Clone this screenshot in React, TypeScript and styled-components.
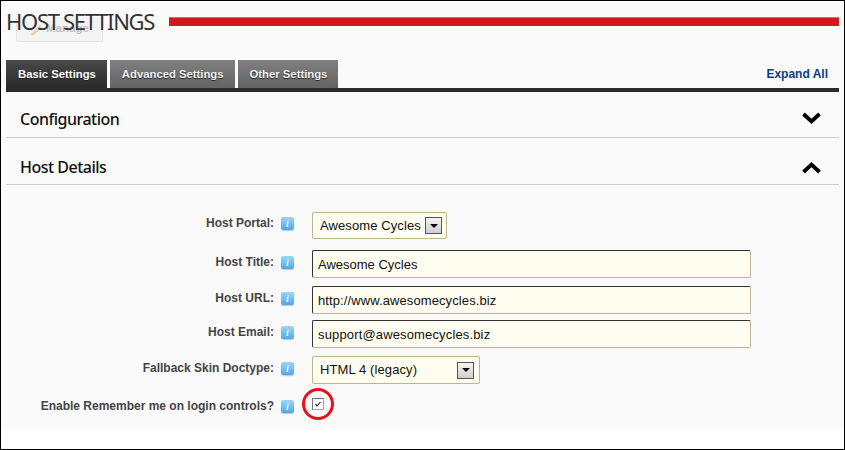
import React from "react";
import styled, { createGlobalStyle } from "styled-components";

const Global = createGlobalStyle`
  html, body { margin: 0; padding: 0; background: #fff; }
  #root { width: 845px; height: 450px; overflow: hidden; }
`;

const Frame = styled.div`
  box-sizing: border-box;
  width: 845px;
  height: 450px;
  border: 1px solid #000;
  background: #fff;
  font-family: "Liberation Sans", Arial, sans-serif;
  position: relative;
`;
const Surface = styled.div`
  box-sizing: border-box;
  height: 429px;
  background: #fafafa;
  padding: 0 5px;
  display: flex;
  flex-direction: column;
`;
const TitleRow = styled.div`
  height: 59px;
  display: flex;
  align-items: flex-start;
  position: relative;
`;
const Title = styled.h1`
  margin: 7px 0 0 0;
  font: 400 22px/26px "Noto Sans", sans-serif;
  color: #333;
  letter-spacing: -1.3px;
  white-space: nowrap;
  position: relative;
  z-index: 1;
`;
const RedBar = styled.div`
  flex: 1;
  height: 8px;
  margin: 16px 0 0 15px;
  background: #d2171f;
  border-top: 1px solid #e2686c;
`;
const ManageButton = styled.div`
  position: absolute;
  left: 10px;
  top: 16px;
  width: 87px;
  height: 25px;
  box-sizing: border-box;
  border: 1px solid #e4e4e4;
  border-top: none;
  border-radius: 2px;
  background: #f4f4f4;
  color: #c0c0c0;
  font: 700 11.5px/20px "Liberation Sans", sans-serif;
  padding: 1px 0 0 29px;
`;
const ManageIcon = styled.svg`
  position: absolute;
  left: 13px;
  top: 6px;
`;
const TabBar = styled.div`
  display: flex;
  align-items: flex-end;
  height: 28px;
  gap: 3px;
  position: relative;
`;
const Tab = styled.div<{ $active?: boolean }>`
  height: 28px;
  box-sizing: border-box;
  padding: 0 11px 0 12px;
  display: flex;
  align-items: center;
  font: 700 11.3px/14px "Liberation Sans", sans-serif;
  color: ${(p) => (p.$active ? "#fff" : "#f0f0f0")};
  background: ${(p) =>
    p.$active
      ? "linear-gradient(#4a4a4a, #2a2a2a)"
      : "linear-gradient(#808080, #636363)"};
  text-shadow: 0 1px 1px #222;
`;
const ExpandAll = styled.a`
  margin-left: auto;
  margin-right: 11px;
  align-self: center;
  color: #0b3f80;
  font: 700 12px/14px "Liberation Sans", sans-serif;
`;
const DarkRule = styled.div`
  height: 4px;
  background: #2b2b2b;
`;
const Section = styled.div<{ $h: number; $top: number }>`
  height: ${(p) => p.$h}px;
  box-sizing: border-box;
  border-bottom: 1px solid #ccc;
  padding: ${(p) => p.$top}px 18px 0 14px;
  display: flex;
  align-items: center;
  justify-content: space-between;
`;
const SectionTitle = styled.h2`
  margin: 0;
  font: 500 16px/20px "Noto Sans", sans-serif;
  letter-spacing: -0.5px;
  color: #111;
`;
const Form = styled.div`
  display: grid;
  grid-template-columns: 268px 38px 1fr;
  margin-top: 27px;
`;
const Label = styled.div<{ $h: number; $gap: number }>`
  height: ${(p) => p.$h}px;
  margin-bottom: ${(p) => p.$gap}px;
  text-align: right;
  font: 700 12px/${(p) => p.$h - 4}px "Liberation Sans", sans-serif;
  color: #444;
  white-space: nowrap;
`;
const Help = styled.div<{ $h: number; $gap: number }>`
  height: ${(p) => p.$h}px;
  margin-bottom: ${(p) => p.$gap}px;
  padding-left: 7px;
  display: flex;
  align-items: flex-start;
  padding-top: ${(p) => Math.floor((p.$h - 14) / 2) - 1}px;
  box-sizing: border-box;
`;
const HelpIcon = styled.div`
  width: 13px;
  height: 13px;
  border-radius: 2px;
  background: linear-gradient(#9ad6f7, #4fa8e6);
  box-shadow: 0 1px 1px #c4c4c4;
  color: #e4f4fd;
  font: italic 700 10px/13px "Liberation Serif", serif;
  text-align: center;
`;
const Control = styled.div<{ $h: number; $gap: number }>`
  height: ${(p) => p.$h}px;
  margin-bottom: ${(p) => p.$gap}px;
`;
const SelectBox = styled.div<{ $w: number }>`
  box-sizing: border-box;
  width: ${(p) => p.$w}px;
  height: 100%;
  border: 1px solid #bdb68a;
  border-radius: 2px;
  background: #fffdf0;
  display: flex;
  align-items: center;
  justify-content: space-between;
  padding: 0 4px 0 7px;
  font: 400 13px/18px "Liberation Sans", sans-serif;
  letter-spacing: 0.1px;
  color: #111;
  white-space: nowrap;
`;
const Arrow = styled.div`
  box-sizing: border-box;
  width: 17px;
  height: 17px;
  border: 1px solid #555;
  background: linear-gradient(#f4f4f4, #cfcfcf);
  display: flex;
  align-items: center;
  justify-content: center;
  flex: none;
  &::after {
    content: "";
    border-left: 4px solid transparent;
    border-right: 4px solid transparent;
    border-top: 4px solid #000;
  }
`;
const WideArrow = styled(Arrow)`
  margin-right: 1px;
`;
const TextBox = styled.div<{ $spacing?: number }>`
  box-sizing: border-box;
  width: 439px;
  height: 100%;
  border: 1px solid;
  border-color: #333 #bdb68a #bdb68a #333;
  border-radius: 2px;
  background: #fffdf0;
  padding: 0 5px;
  font: 400 13px/28px "Liberation Sans", sans-serif;
  letter-spacing: ${(p) => p.$spacing ?? 0}px;
  color: #111;
`;
const Check = styled.div`
  box-sizing: border-box;
  width: 12px;
  height: 12px;
  border: 1px solid;
  border-color: #777 #aaa #aaa #777;
  background: #fff;
  position: relative;
`;
const Circle = styled.div`
  position: absolute;
  left: -11px;
  top: -11px;
  width: 32px;
  height: 32px;
  box-sizing: border-box;
  border: 3px solid #e8101a;
  border-radius: 50%;
`;

type R = { label: string; h: number; gap: number; c: React.ReactNode };
const rows: R[] = [
  {
    label: "Host Portal:",
    h: 27,
    gap: 11,
    c: (
      <SelectBox $w={135}>
        Awesome Cycles
        <Arrow />
      </SelectBox>
    ),
  },
  { label: "Host Title:", h: 28, gap: 8, c: <TextBox>Awesome Cycles</TextBox> },
  { label: "Host URL:", h: 28, gap: 6, c: <TextBox $spacing={0.1}>http://www.awesomecycles.biz</TextBox> },
  { label: "Host Email:", h: 28, gap: 8, c: <TextBox $spacing={0.15}>support@awesomecycles.biz</TextBox> },
  {
    label: "Fallback Skin Doctype:",
    h: 28,
    gap: 14,
    c: (
      <SelectBox $w={168}>
        HTML 4 (legacy)
        <WideArrow />
      </SelectBox>
    ),
  },
  {
    label: "Enable Remember me on login controls?",
    h: 20,
    gap: 0,
    c: (
      <Check>
        <svg width="10" height="10" viewBox="0 0 10 10" style={{ display: "block" }}>
          <path d="M2.5 5 L4 7 L7.5 3" fill="none" stroke="#111" strokeWidth="1.1" />
        </svg>
        <Circle />
      </Check>
    ),
  },
];

const Chevron = ({ up }: { up?: boolean }) => (
  <svg width="19" height="13" viewBox="0 0 19 13">
    <path
      d={up ? "M1.5 11 L9.5 3.5 L17.5 11" : "M1.5 2 L9.5 9.5 L17.5 2"}
      fill="none"
      stroke="#000"
      strokeWidth="3.8"
    />
  </svg>
);

export default function App() {
  return (
    <Frame>
      <Global />
      <Surface>
        <TitleRow>
          <ManageButton>
            <ManageIcon width="14" height="14" viewBox="0 0 14 14">
              <path d="M2 12 L11 3" stroke="#e3d3b0" strokeWidth="3" />
            </ManageIcon>
            Manage
          </ManageButton>
          <Title>HOST SETTINGS</Title>
          <RedBar />
        </TitleRow>
        <TabBar>
          <Tab $active>Basic Settings</Tab>
          <Tab>Advanced Settings</Tab>
          <Tab>Other Settings</Tab>
          <ExpandAll>Expand All</ExpandAll>
        </TabBar>
        <DarkRule />
        <Section $h={46} $top={8}>
          <SectionTitle>Configuration</SectionTitle>
          <Chevron />
        </Section>
        <Section $h={47} $top={12}>
          <SectionTitle>Host Details</SectionTitle>
          <Chevron up />
        </Section>
        <Form>
          {rows.map((r) => (
            <React.Fragment key={r.label}>
              <Label $h={r.h} $gap={r.gap}>{r.label}</Label>
              <Help $h={r.h} $gap={r.gap}>
                <HelpIcon>i</HelpIcon>
              </Help>
              <Control $h={r.h} $gap={r.gap}>{r.c}</Control>
            </React.Fragment>
          ))}
        </Form>
      </Surface>
    </Frame>
  );
}
